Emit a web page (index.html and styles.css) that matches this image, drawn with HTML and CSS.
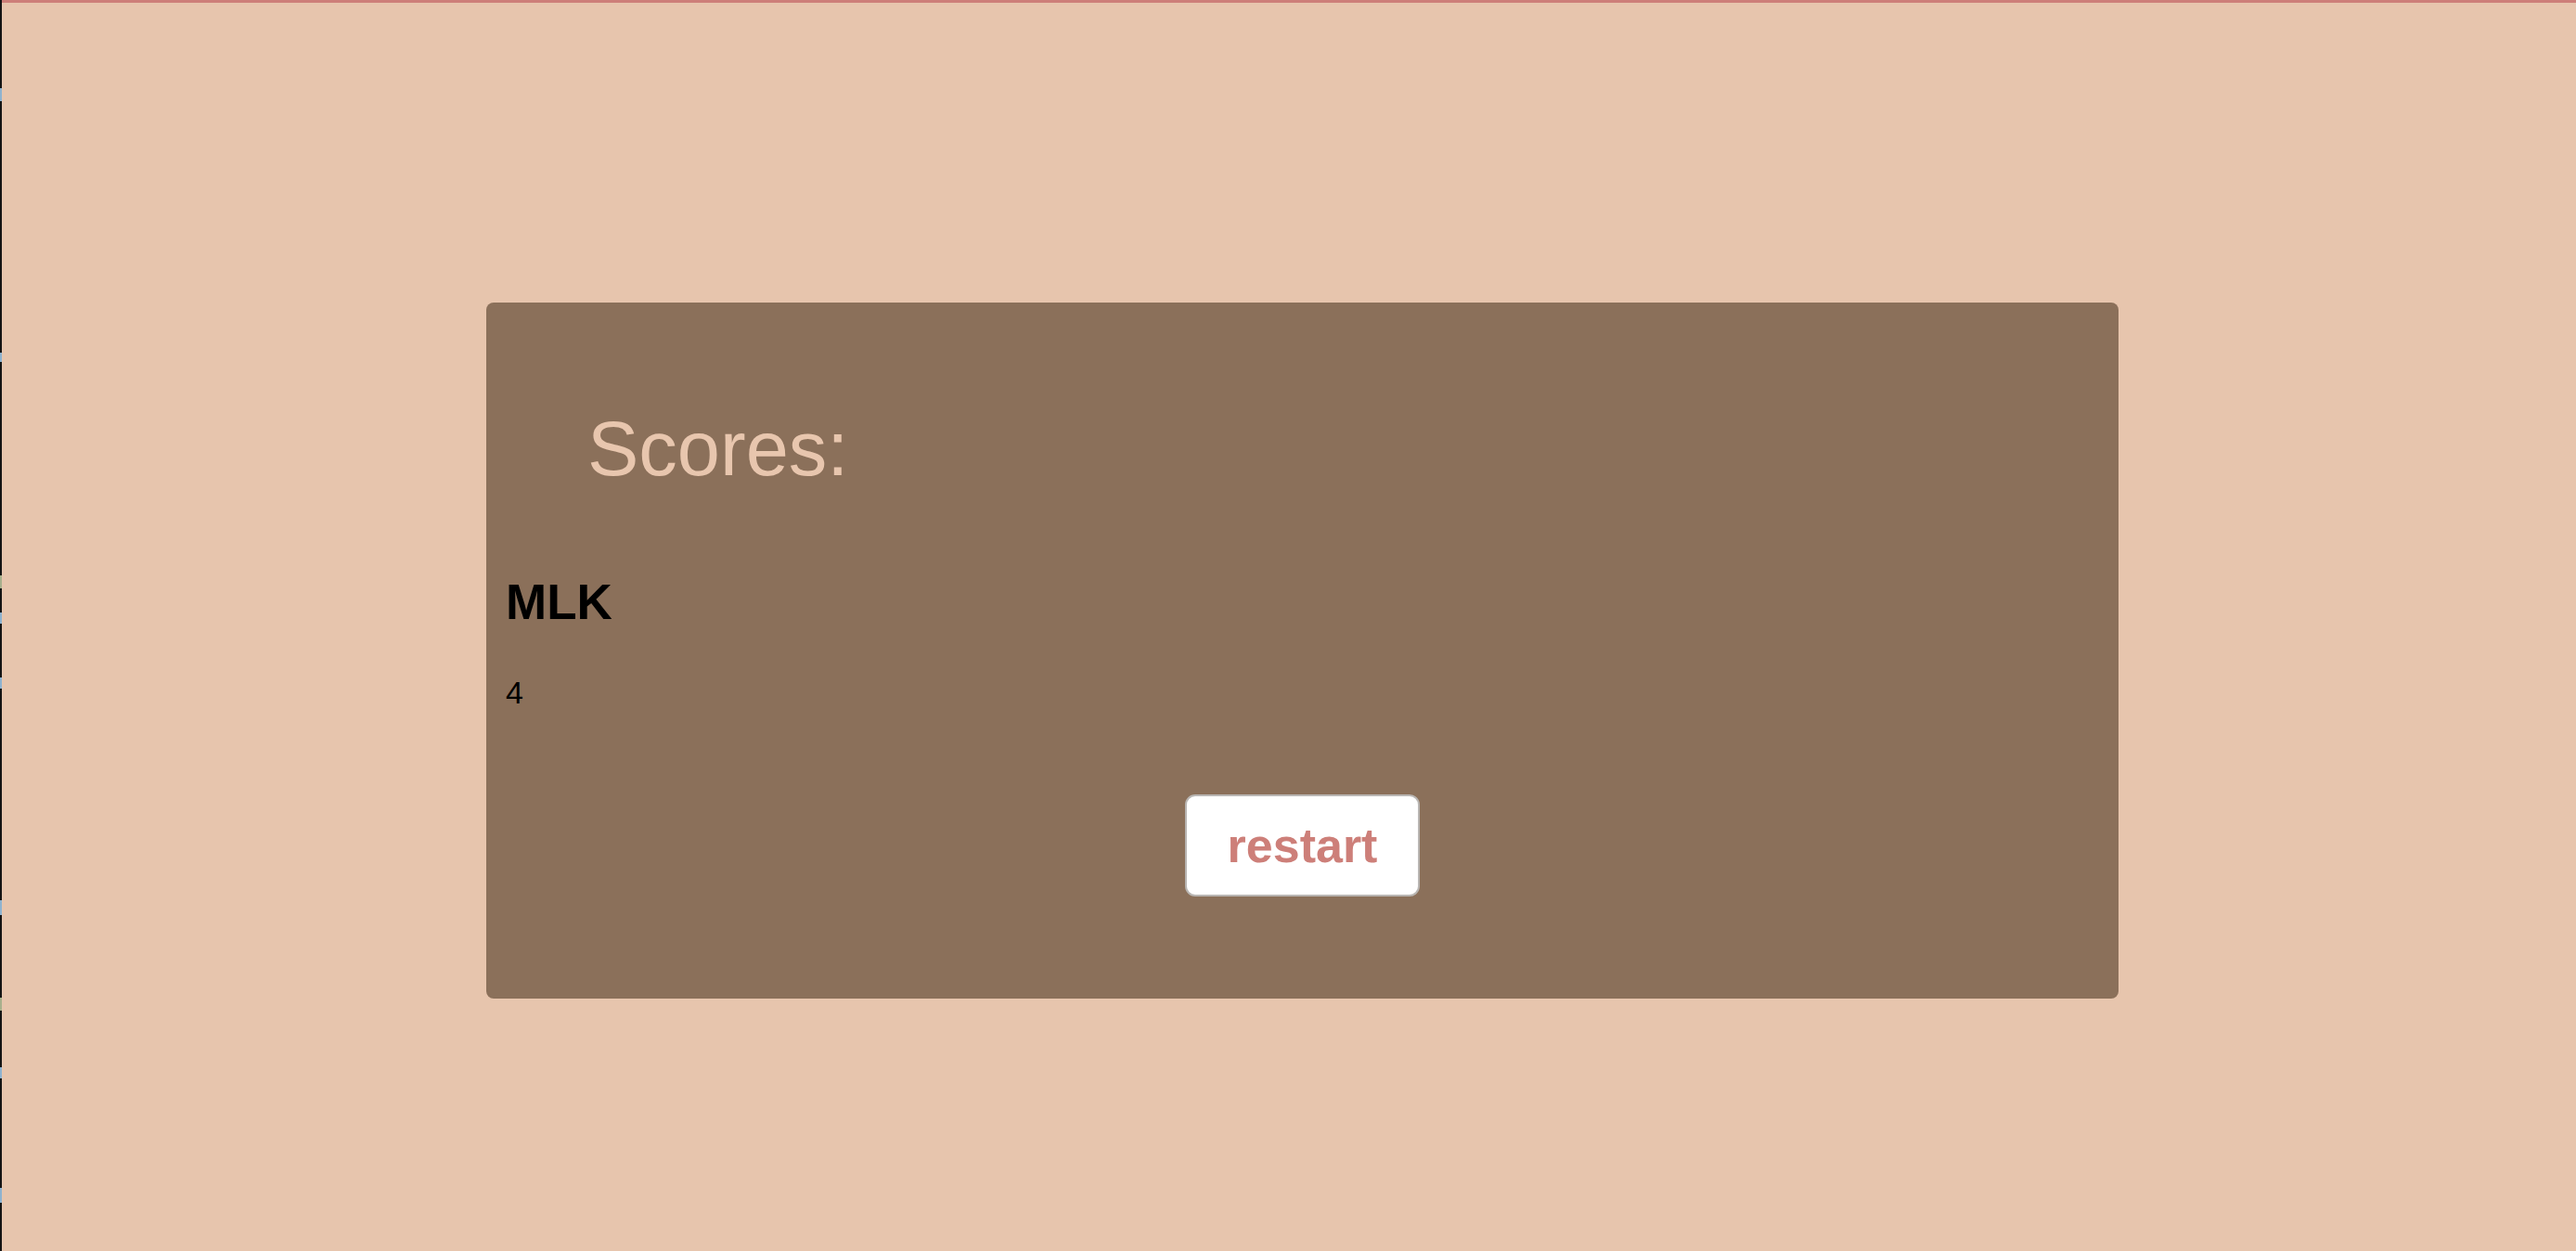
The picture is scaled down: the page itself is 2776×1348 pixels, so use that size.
FILE: index.html
```html
<!DOCTYPE html>
<html lang="en">
<head>
<meta charset="utf-8">
<title>Scores</title>
<link rel="stylesheet" href="styles.css">
</head>
<body>
<div class="frame">
  <div class="edge"></div>
  <main class="page">
    <section class="card">
      <h1 class="title">Scores:</h1>
      <h2 class="player">MLK</h2>
      <p class="score">4</p>
      <div class="actions">
        <button class="restart" type="button">restart</button>
      </div>
    </section>
  </main>
</div>
</body>
</html>
```
FILE: styles.css
```css
html, body {
  margin: 0;
  padding: 0;
  height: 100%;
}
body {
  font-family: "Liberation Sans", Arial, sans-serif;
  background: #e7c5ad;
}
.frame {
  display: flex;
  height: 1348px;
  overflow: hidden;
}
.edge {
  width: 2px;
  flex: none;
  background:
    linear-gradient(#8fb3cf, #8fb3cf) 0 95px / 2px 14px no-repeat,
    linear-gradient(#8fb3cf, #8fb3cf) 0 380px / 2px 10px no-repeat,
    linear-gradient(#a8b08c, #a8b08c) 0 620px / 2px 14px no-repeat,
    linear-gradient(#8fb3cf, #8fb3cf) 0 660px / 2px 12px no-repeat,
    linear-gradient(#8fb3cf, #8fb3cf) 0 730px / 2px 12px no-repeat,
    linear-gradient(#8fb3cf, #8fb3cf) 0 970px / 2px 16px no-repeat,
    linear-gradient(#a8b08c, #a8b08c) 0 1075px / 2px 14px no-repeat,
    linear-gradient(#8fb3cf, #8fb3cf) 0 1150px / 2px 12px no-repeat,
    linear-gradient(#8fb3cf, #8fb3cf) 0 1280px / 2px 16px no-repeat,
    #141414;
}
.page {
  flex: 1;
  background: #e7c5ad;
  border-top: 3px solid #cd7f79;
  padding: 323px 0 0 522px;
}
.card {
  width: 1717px;
  background: #8b705a;
  border-radius: 8px;
  padding: 116px 21px 110px;
  display: flex;
  flex-direction: column;
}
.title {
  margin: 0 0 0 88px;
  font-size: 83px;
  line-height: 1;
  font-weight: 400;
  color: #e8c6ae;
}
.player {
  margin: 97px 0 0;
  font-size: 53px;
  line-height: 1;
  font-weight: 700;
  color: #000;
}
.score {
  margin: 54px 0 0;
  font-size: 34px;
  line-height: 1;
  color: #000;
}
.actions {
  display: flex;
  justify-content: center;
  margin-top: 93px;
}
.restart {
  font-family: "Liberation Sans", Arial, sans-serif;
  font-size: 52px;
  line-height: 1;
  font-weight: 700;
  color: #cd7f79;
  background: #fff;
  border: 2px solid #b9b6b3;
  border-radius: 11px;
  padding: 27px 44px;
  cursor: pointer;
}
```
